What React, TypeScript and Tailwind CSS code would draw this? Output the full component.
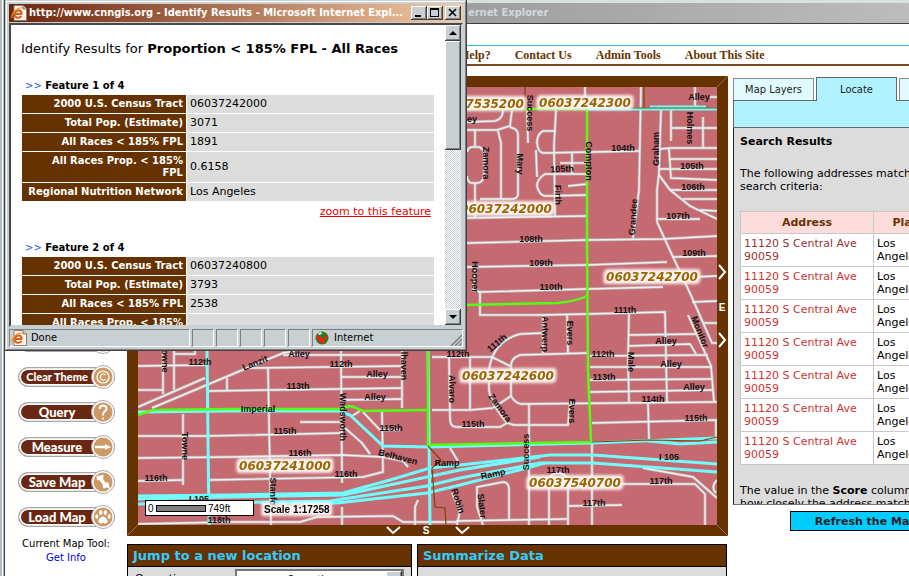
import type { ReactNode } from "react";

const VERDANA = "font-['DejaVu_Sans',sans-serif]";
const TAHOMA = "font-['DejaVu_Sans_Condensed','DejaVu_Sans',sans-serif]";

const RAISED =
  "bg-[#c8d0d4] shadow-[inset_-1px_-1px_#404040,inset_1px_1px_#ffffff,inset_-2px_-2px_#808080]";
const SUNKEN = "border border-t-[#808080] border-l-[#808080] border-r-white border-b-white";

/* ---------- map data ---------- */

const streets = [
  "M585 87V108", "M641 87L639 190L633 238", "M695 87V108", "M710 97H717",
  "M467 122L495 121Q503 119 503 110", "M467 130L497 130L510 126L512 110",
  "M510 127L515 129Q518 131 518 135V195Q517 199 512 199H480", "M498 131L501 143V199",
  "M475 130V147", "M467 152Q468 147 473 147H479Q484 149 484 154V177Q482 183 477 183H471Q467 181 467 176",
  "M475 183V217", "M527 110L528 143", "M556 110L554 145L555 216",
  "M556 131H543Q537 134 537 143Q538 152 543 153L640 151", "M536 150L537 177",
  "M587 174H545Q537 179 537 186Q539 195 545 196L587 195",
  "M560 163H587", "M572 153V174", "M568 186L587 184", "M661 110L659 173L657 190V222",
  "M657 222L673 257L690 293L712 343H717", "M659 175L670 190L690 206L717 219",
  "M671 110V141", "M671 128H717", "M703 117V148", "M660 149L671 148H717",
  "M669 149L671 178L717 180", "M670 159H717", "M659 169H717", "M670 190H717",
  "M657 219H700", "M683 199H717", "M700 210L717 211",
  "M467 218L587 216", "M467 243L587 240L663 239L717 236", "M467 267L587 265L667 262",
  "M673 257L717 256", "M480 292L587 289L663 287",
  "M475 268L473 290L480 292V315H540L588 314L665 312L667 402",
  "M543 315V353", "M567 315L568 353",
  "M543 333L520 334Q493 341 489 370V390Q491 404 507 423L514 425H568L570 400",
  "M588 353L520 355Q511 358 511 366V396Q515 403 521 404L717 402",
  "M492 357L510 366", "M511 396L493 408", "M432 357H492", "M470 357V409",
  "M432 410H470L493 408", "M449 357L450 418Q450 427 456 427H500L507 423",
  "M629 313L628 360L629 402", "M628 335L697 334", "M628 346L690 344L696 354",
  "M590 356L708 355", "M590 367L712 367", "M590 380L713 379", "M590 392L713 390",
  "M688 315L711 366L714 402", "M692 302L717 301", "M693 277L717 276", "M703 323H717",
  "M648 402L649 440", "M592 423L717 420", "M716 420V438", "M529 404V525", "M592 442V525",
  "M549 525V480Q550 474 558 473Q567 474 568 480V525", "M568 506L622 505",
  "M456 521L510 520L567 519", "M483 525L477 507V487L503 482Q508 482 509 488V520",
  "M620 484H695L705 494V525", "M643 468L693 477L717 498", "M717 480Q710 487 716 493",
  "M138 366L207 365", "M138 390H163", "M163 350V394", "M174 350V390", "M174 354H195V350",
  "M138 407L205 378", "M152 408L240 371L283 353L300 350", "M227 378V390",
  "M209 391L402 388", "M138 436H207L342 433", "M138 458L230 457L342 455L383 457L403 461L408 467",
  "M138 481L183 480", "M209 480L363 477L383 472L382 412", "M183 414V485",
  "M138 524L230 522H300L317 517L393 516L403 522H456",
  "M268 368L271 525", "M341 350L342 483", "M342 507V525", "M402 350V408",
  "M250 368L402 366", "M341 377H402", "M341 400L402 399", "M283 355H402", "M300 422H342",
  "M345 428L362 443L370 454", "M363 412L380 430H400", "M352 416L360 411",
  "M450 448L458 461", "M452 493L460 510L457 525", "M418 500L415 507V525",
];

const freeways = [
  "M207 350L209 525", "M428 350L430 525", "M138 412L230 411H340L350 415L383 446L428 447L591 443L717 438",
  "M138 496L230 495L343 493L390 480L430 468L460 465L550 455H593L717 464",
  "M138 499L230 497L343 495L427 477L460 470L540 457",
  "M138 504L330 501L427 486L460 478L540 463H593L717 472",
  "M260 503L337 503L427 493L460 485L523 469L545 463",
  "M587 109L717 109", "M650 107H706", "M648 441L680 444L717 442",
];

const tractEdges = [
  "M467 109H587L587 240L588 370L591 442L428 445V350",
  "M467 305L557 303Q577 301 587 296",
  "M138 415L153 410L230 409H340Q350 404 356 408L363 411L427 410",
];

const countyEdges = [
  "M525 87V109", "M644 87V108", "M592 442L650 440L700 441L717 437", "M630 108H717",
  "M428 446L441 460L432 468L435 507L445 508L446 525",
];

type Label = [text: string, x: number, y: number, angle?: number];

const streetNames: Label[] = [
  ["Alley", 699, 97], ["Success", 530, 113, 90], ["ey", 472, 119], ["Zamora", 486, 163, 90],
  ["Mary", 520, 164, 90], ["Compton", 589, 161, 90], ["104th", 623, 148], ["105th", 562, 169, -3],
  ["Firth", 558, 195, 90], ["Graham", 656, 149, -90], ["Holmes", 690, 128, 90], ["105th", 692, 166],
  ["106th", 693, 187], ["107th", 678, 216], ["Grandee", 633, 217, -86], ["108th", 531, 239],
  ["109th", 541, 263], ["109th", 694, 253], ["110th", 551, 287], ["Hooper", 475, 277, 90],
  ["111th", 625, 310], ["111th", 497, 343, -40], ["Antwerp", 545, 334, 90], ["Evers", 570, 333, 90],
  ["Monitor", 700, 332, 68], ["Alley", 666, 341], ["112th", 603, 354], ["Alley", 671, 364],
  ["Male", 631, 362, 90], ["113th", 604, 377], ["Alley", 694, 387], ["114th", 653, 399],
  ["115th", 696, 418], ["Evers", 572, 411, 90], ["Zamora", 500, 408, 54], ["115th", 473, 424],
  ["Success", 526, 452, -90], ["I 105", 669, 457], ["Ramp", 493, 474, -12], ["Ramp", 447, 463],
  ["117th", 558, 470], ["117th", 661, 481], ["117th", 594, 503], ["Slater", 482, 506, 83],
  ["Robin", 458, 501, 72], ["Alvaro", 452, 389, 90], ["112th", 458, 354], ["lhaven", 404, 366, 90],
  ["Alley", 299, 354], ["112th", 341, 364], ["Alley", 377, 374], ["113th", 298, 386],
  ["Alley", 375, 397], ["Lanzit", 255, 363, -22], ["Imperial", 258, 409], ["Wadsworth", 343, 417, 90],
  ["115th", 285, 431], ["115th", 391, 428], ["116th", 300, 453], ["116th", 346, 474],
  ["Belhaven", 398, 457, 14], ["Stanford", 273, 496, 90], ["owne", 165, 361, 90],
  ["112th", 200, 362], ["Towne", 185, 446, 90], ["116th", 156, 478], ["I 105", 199, 499],
  ["118th", 219, 520],
];

const tracts: Label[] = [
  ["06037535200", 478, 104], ["06037242300", 585, 103], ["06037242000", 506, 209],
  ["06037242700", 652, 277], ["06037242600", 508, 376], ["06037540700", 575, 483],
  ["06037241000", 285, 466],
];

function Lines({ paths, stroke, width }: { paths: string[]; stroke: string; width: number }) {
  return (
    <g fill="none" stroke={stroke} strokeWidth={width}>
      {paths.map((d) => (
        <path key={d} d={d} />
      ))}
    </g>
  );
}

function MapView() {
  return (
    <div className="bg-[#663300]">
      <svg viewBox="127 76 601 460" className="block h-auto w-full" role="img" aria-label="Census tract map">
        <defs>
          <filter id="halo" x="-15%" y="-60%" width="130%" height="220%" colorInterpolationFilters="sRGB">
            <feMorphology in="SourceAlpha" operator="dilate" radius="3" />
            <feGaussianBlur stdDeviation="1.5" result="spread" />
            <feFlood floodColor="#fff4f4" />
            <feComposite in2="spread" operator="in" />
            <feMerge>
              <feMergeNode />
              <feMergeNode in="SourceGraphic" />
            </feMerge>
          </filter>
          <clipPath id="mapArea">
            <rect x="138" y="87" width="579" height="438" />
          </clipPath>
        </defs>
        <g clipPath="url(#mapArea)">
          <rect x="138" y="87" width="579" height="438" fill="#c56a70" />
          <Lines paths={streets} stroke="#bcaeb0" width={3} />
          <Lines paths={streets} stroke="#f0f0f0" width={1.4} />
          <Lines paths={freeways} stroke="#70ffff" width={3} />
          <Lines paths={tractEdges} stroke="#55ff11" width={2.5} />
          <Lines paths={countyEdges} stroke="#7f4400" width={1.2} />
          <g className="font-['Liberation_Sans',sans-serif] text-[9px] font-bold" fill="#101010" textAnchor="middle">
            {streetNames.map(([text, x, y, angle = 0]) => (
              <text key={`${text}${x}${y}`} transform={`translate(${x} ${y}) rotate(${angle})`} dy={3}>
                {text}
              </text>
            ))}
          </g>
          <g className={`${VERDANA} text-[12px] font-bold italic`} fill="#996600" textAnchor="middle">
            {tracts.map(([text, x, y]) => (
              <text key={text} x={x} y={y + 4} filter="url(#halo)">
                {text}
              </text>
            ))}
          </g>
          <rect x="145.500" y="500.500" width="108" height="15" fill="#fff" stroke="#000" />
          <rect x="156.500" y="505.500" width="49" height="6" fill="#808080" stroke="#000" />
          <g className="font-['Liberation_Sans',sans-serif] text-[10px]" fill="#000">
            <text x="148" y="512">0</text>
            <text x="208" y="512">749ft</text>
            <text x="264" y="513" filter="url(#halo)" className="font-bold">
              Scale 1:17258
            </text>
          </g>
        </g>
        <g stroke="#94714d" strokeWidth="1">
          <path d="M717 87L728 76M717 525L728 536M138 525L127 536" />
        </g>
        <g fill="none" stroke="#fff" strokeWidth="2">
          <path d="M719 265L725 272L719 279M719 333L725 340L719 347" />
          <path d="M387 527L393 533L400 527M456 527L462 533L469 527" />
        </g>
        <g className="font-['Liberation_Sans',sans-serif] text-[10px] font-bold" fill="#fff" textAnchor="middle">
          <text x="722" y="311">E</text>
          <text x="426" y="534">S</text>
        </g>
      </svg>
    </div>
  );
}

/* ---------- left tool column ---------- */

const toolIcons: Record<string, ReactNode> = {
  "Clear Theme": (
    <>
      <circle cx="12" cy="12" r="6" />
      <path d="M14.500 10Q12 7.500 10 10Q8.800 12 10 14Q12 16.500 14.500 14" />
    </>
  ),
  Query: (
    <>
      <path d="M8.500 9Q9 5.500 12 5.500Q15.500 5.500 15.500 8.500Q15.500 10.500 13 12Q12 13 12 15.500" strokeWidth="2" />
      <circle cx="12" cy="18.500" r="1" fill="#fff" stroke="none" />
    </>
  ),
  Measure: (
    <>
      <path d="M4 12H15" strokeWidth="2.500" />
      <path d="M14 9L20 12L14 15Z" fill="#fff" stroke="none" />
    </>
  ),
  "Save Map": (
    <path d="M6 6.500L12 5.500L11.500 9L14 13L17 13L18 18L15 16.500L13 18L12 14L9 10L6.500 9.500Z" fill="#fff" />
  ),
  "Load Map": (
    <g fill="#fff" stroke="none">
      <path d="M12 11.500Q15 12 16.500 15.500Q17 18.500 14 18.500Q12 17.500 10 18.500Q7 18.500 7.500 15.500Q9 12 12 11.500Z" />
      <ellipse cx="9.700" cy="7.500" rx="1.700" ry="2.600" />
      <ellipse cx="14.300" cy="7.500" rx="1.700" ry="2.600" />
      <ellipse cx="5.800" cy="11.500" rx="1.500" ry="2.200" />
      <ellipse cx="18.200" cy="11.500" rx="1.500" ry="2.200" />
    </g>
  ),
};

function ToolButton({ label }: { label?: string }) {
  return (
    <button type="button" aria-label={label ?? "Map tool"} className="relative flex h-6 w-[97px] items-center">
      <span
        className={`flex h-5 w-full items-center justify-center rounded-full border border-[#a8a8a8] bg-[#6a2812] pr-[18px] font-['Lato',sans-serif] ${
          label === "Clear Theme" ? "text-[11px]" : "text-[13px]"
        } leading-4 font-black whitespace-nowrap text-white shadow-[inset_0_0_0_1px_#e8e8e8,inset_0_0_0_2px_#fff]`}
      >
        {label}
      </span>
      <svg viewBox="0 0 24 24" className="absolute right-0 size-6" fill="none" stroke="#fff" strokeWidth="1.200">
        <circle cx="12" cy="12" r="11.500" fill="#fff" stroke="#a8a8a8" strokeWidth="1" />
        <circle cx="12" cy="12" r="9.500" fill="#cc9966" stroke="none" />
        {label ? toolIcons[label] : null}
      </svg>
    </button>
  );
}

function ToolColumn() {
  return (
    <aside className={`flex w-[122px] shrink-0 flex-col items-center pt-[254px] ${VERDANA}`}>
      <div className="flex flex-col gap-[11px]">
        <ToolButton />
        {Object.keys(toolIcons).map((label) => (
          <ToolButton key={label} label={label} />
        ))}
      </div>
      <p className="pt-2 text-center text-[10px] leading-[14px]">
        Current Map Tool:
        <br />
        <a href="#info" className="text-[#0000dd]">
          Get Info
        </a>
      </p>
    </aside>
  );
}

/* ---------- right results panel ---------- */

function ResultsPanel() {
  return (
    <section className={`w-[176px] shrink-0 overflow-hidden pt-px text-[11px] leading-[13px] ${VERDANA}`}>
      <div className="w-[264px]">
        <div className={`flex items-end gap-[2px] leading-4 text-[#222] ${TAHOMA}`}>
          <button type="button" className="h-[22px] w-[81px] border border-b-0 border-[#888] bg-[#e0faff]">
            Map Layers
          </button>
          <button type="button" className="relative -mb-px h-6 w-[81px] border border-b-0 border-[#666] bg-[#b0f2ff]">
            Locate
          </button>
          <button type="button" aria-label="More" className="h-[22px] w-[81px] border border-b-0 border-[#888] bg-[#e0faff]" />
        </div>
        <div className="h-[28px] border border-[#666] bg-[#b0f2ff]" />
        <div className="h-[377px] overflow-hidden border border-t-0 border-[#777] border-l-[#222] bg-[#dcdcdc] px-[6px] pt-[7px]">
          <h2 className="font-bold">Search Results</h2>
          <p className="pt-[19px]">
            The following addresses match your
            <br />
            search criteria:
          </p>
          <table className="mt-[18px] w-[205px] table-fixed border-collapse bg-white text-left">
            <thead>
              <tr className="h-[22px] bg-[#ffdcdc] text-center text-[#663300]">
                <th className="w-[133px] border border-[#c8c8c8]">Address</th>
                <th className="border border-[#c8c8c8]">Place</th>
              </tr>
            </thead>
            <tbody>
              {[0, 1, 2, 3, 4, 5, 6].map((row) => (
                <tr key={row} className="h-[33px] align-top">
                  <td className="border border-[#c8c8c8] px-[3px] py-[3px]">
                    <a href="#address" className={row === 0 ? "text-[#993333]" : "text-[#cc3333]"}>
                      11120 S Central Ave 90059
                    </a>
                  </td>
                  <td className="border border-[#c8c8c8] px-[3px] py-[3px]">
                    Los
                    <br />
                    Angeles
                  </td>
                </tr>
              ))}
            </tbody>
          </table>
          <p className="pt-[19px]">
            The value in the <b>Score</b> column indicates how closely the address matches
          </p>
        </div>
        <button
          type="button"
          className="mt-[6px] ml-[57px] h-5 w-[152px] border border-black bg-[#00ccff] text-center font-bold text-[#222]"
        >
          Refresh the Map
        </button>
      </div>
    </section>
  );
}

/* ---------- bottom cards ---------- */

function Card({ title, className, children }: { title: string; className: string; children?: ReactNode }) {
  return (
    <section className={`h-24 border border-black bg-[#dcdcdc] ${className}`}>
      <h2 className={`h-[22px] border-b border-black bg-[#663300] px-[5px] text-[13px] leading-[21px] font-bold text-[#33ccff] ${VERDANA}`}>
        {title}
      </h2>
      {children}
    </section>
  );
}

/* ---------- popup window ---------- */

function PageIcon() {
  return (
    <svg viewBox="0 0 16 16" className="size-4 shrink-0">
      <path d="M3 .5H12L15.500 4V15.500H3Z" fill="#fff4ec" stroke="#8a7a70" />
      <path d="M12 .5V4H15.500" fill="#e0c8b8" stroke="#8a7a70" />
      <path d="M10.500 11Q8.500 13.500 5.500 12.500Q3 11 4 8Q5.500 5 8.500 5.500Q11 6.500 10.500 9H5" fill="none" stroke="#d8601c" strokeWidth="2" />
      <path d="M1 13Q0 9 5 5Q9 2 12 3" fill="none" stroke="#f09028" strokeWidth="1.200" />
    </svg>
  );
}

const FEATURES = [
  { tract: "06037242000", pop: "3071", races: "1891", prop: "0.6158" },
  { tract: "06037240800", pop: "3793", races: "2538", prop: "" },
];

function Feature({ index }: { index: number }) {
  const f = FEATURES[index];
  const rows: [ReactNode, string][] = [
    ["2000 U.S. Census Tract", f.tract],
    ["Total Pop. (Estimate)", f.pop],
    ["All Races < 185% FPL", f.races],
    [
      <>
        All Races Prop. &lt; 185%
        <br />
        FPL
      </>,
      f.prop,
    ],
    ["Regional Nutrition Network", "Los Angeles"],
  ];
  return (
    <section className="mb-[23px]">
      <h2 className="px-[3px] pb-[2px] text-[10px] leading-[13px] font-bold">
        <span className="font-normal text-[#2255ee]">&gt;&gt;</span> Feature {index + 1} of 4
      </h2>
      <table className="-mx-px w-[414px] table-fixed border-separate border-spacing-px text-[11px] leading-3">
        <tbody>
          {rows.map(([name, value], i) => (
            <tr key={i}>
              <th className="w-[164px] bg-[#663300] px-[3px] py-[3px] text-right text-[10px] text-white">{name}</th>
              <td className="bg-[#dcdcdc] px-[3px]">{value}</td>
            </tr>
          ))}
        </tbody>
      </table>
      <p className="pt-[3px] pr-[3px] text-right text-[11px] leading-[13px]">
        <a href="#feature" className="text-[#ee0000] underline">
          zoom to this feature
        </a>
      </p>
    </section>
  );
}

function ScrollButton({ up }: { up?: boolean }) {
  return (
    <button type="button" aria-label={up ? "Scroll up" : "Scroll down"} className={`flex h-4 w-4 items-center justify-center ${RAISED}`}>
      <svg viewBox="0 0 8 4" className="h-1 w-2">
        <path d={up ? "M0 4L4 0L8 4Z" : "M0 0L4 4L8 0Z"} />
      </svg>
    </button>
  );
}

function Popup() {
  return (
    <div
      role="dialog"
      aria-label="Identify Results"
      className="absolute top-0 left-[5px] w-[462px] bg-[#c8d0d4] p-1 shadow-[inset_-1px_-1px_#404040,inset_1px_1px_#c8d0d4,inset_-2px_-2px_#808080,inset_2px_2px_#ffffff]"
    >
      <header className="flex h-[18px] items-center bg-linear-to-r from-[#6d2408] to-[#f4cca6] px-[2px]">
        <PageIcon />
        <h1 className={`flex-1 truncate pl-[2px] text-[11px] leading-4 font-bold text-white ${TAHOMA}`}>
          http://www.cnngis.org - Identify Results - Microsoft Internet Expl...
        </h1>
        <div className="flex">
          <button type="button" aria-label="Minimize" className={`h-[14px] w-4 ${RAISED}`}>
            <svg viewBox="0 0 16 14" className="h-[14px] w-4"><path d="M4 9H10V11H4Z" /></svg>
          </button>
          <button type="button" aria-label="Maximize" className={`mr-[2px] h-[14px] w-4 ${RAISED}`}>
            <svg viewBox="0 0 16 14" className="h-[14px] w-4"><path d="M3 2H12V11H3ZM4 4V10H11V4Z" fillRule="evenodd" /></svg>
          </button>
          <button type="button" aria-label="Close" className={`h-[14px] w-4 ${RAISED}`}>
            <svg viewBox="0 0 16 14" className="h-[14px] w-4"><path d="M4 3L11 10M11 3L4 10" stroke="#000" strokeWidth="1.600" /></svg>
          </button>
        </div>
      </header>
      <div className="mt-px flex h-[304px] border-2 border-t-[#484848] border-r-[#c8d0d4] border-b-[#c8d0d4] border-l-[#484848] bg-white">
        <div className={`min-w-0 flex-1 overflow-hidden pt-4 pr-[11px] pl-[11px] ${VERDANA}`}>
          <p className="-ml-px pb-[22px] text-[13px] leading-4 whitespace-nowrap">
            Identify Results for <b>Proportion &lt; 185% FPL - All Races</b>
          </p>
          <Feature index={0} />
          <Feature index={1} />
        </div>
        <div className="flex w-4 flex-col bg-[repeating-conic-gradient(#ffffff_0_25%,#c8d0d4_0_50%)] bg-[length:2px_2px]">
          <ScrollButton up />
          <div className={`h-[109px] ${RAISED}`} />
          <div className="flex-1" />
          <ScrollButton />
        </div>
      </div>
      <footer className={`flex h-5 gap-[2px] pt-[2px] text-[11px] leading-4 ${TAHOMA}`}>
        <div className={`flex w-[181px] items-center gap-1 px-px ${SUNKEN}`}>
          <PageIcon />
          Done
        </div>
        {[0, 1, 2, 3, 4].map((i) => (
          <div key={i} className={`w-[22px] ${SUNKEN}`} />
        ))}
        <div className={`flex flex-1 items-center gap-[5px] pl-[2px] ${SUNKEN}`}>
          <svg viewBox="0 0 14 14" className="size-[14px]">
            <circle cx="7" cy="7" r="6.500" fill="#18852a" />
            <path d="M1 4L5 5L8 8L11 3L13 5L9 10L11 13L6 12L3 10Z" fill="#ee2211" />
            <path d="M3 2L6 1L7 3L4 4Z" fill="#ddeedd" />
          </svg>
          <span className="flex-1">Internet</span>
          <svg viewBox="0 0 12 12" className="size-3 self-end" stroke="#808080" strokeWidth="1.500">
            <path d="M1 12L12 1M5 12L12 5M9 12L12 9" />
          </svg>
        </div>
      </footer>
    </div>
  );
}

export default function App() {
  return (
    <div className="relative h-screen overflow-hidden bg-white text-black">
      <div className="h-full pl-[5px] shadow-[inset_2px_0_#b4bec2,inset_3px_0_#ffffff,inset_4px_0_#b4bec2,inset_5px_0_#404040]">
        <div className={`flex h-6 items-center border-t-[3px] border-b border-t-[#d8e0e2] border-b-[#404040] bg-linear-to-r from-[#808080] to-[#bcbcbc] pl-[463px] text-[11px] font-bold whitespace-nowrap text-[#d2d8dc] ${TAHOMA}`}>
          ernet Explorer
        </div>
        <nav className="mt-[21px] flex h-[21px] items-center gap-6 overflow-hidden border-t border-b-2 border-t-[#33bbdd] border-b-[#7a4a20] pl-[455px] font-['Liberation_Serif',serif] text-[12px] leading-4 font-bold whitespace-nowrap text-[#663300]">
          {["Help?", "Contact Us", "Admin Tools", "About This Site"].map((item) => (
            <a key={item} href="#nav">
              {item}
            </a>
          ))}
        </nav>
        <main className="flex pt-[10px]">
          <ToolColumn />
          <div className="min-w-0 flex-1">
            <MapView />
            <div className="flex gap-[5px] pt-2 pr-px">
              <Card title="Jump to a new location" className="w-[285px]">
                <div className={`flex items-start justify-between pt-[2px] pr-[7px] pl-[7px] text-[11px] ${VERDANA}`}>
                  <label htmlFor="operation" className="pt-[2px]">
                    Operation
                  </label>
                  <div className="relative w-[169px]">
                    <select
                      id="operation"
                      className={`h-[22px] w-full appearance-none border-2 border-[#777] bg-white pr-4 text-center text-[11px] ${TAHOMA}`}
                    >
                      <option>Operation</option>
                    </select>
                    <span className={`pointer-events-none absolute top-[2px] right-[2px] h-[18px] w-4 ${RAISED}`} />
                  </div>
                </div>
              </Card>
              <Card title="Summarize Data" className="flex-1" />
            </div>
          </div>
          <div className="w-[5px]" />
          <ResultsPanel />
        </main>
      </div>
      <Popup />
    </div>
  );
}
